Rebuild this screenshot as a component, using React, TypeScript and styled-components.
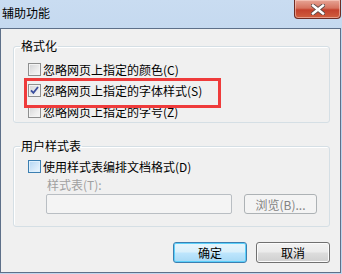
import styled, { createGlobalStyle } from "styled-components";

const GlobalStyle = createGlobalStyle`
  html, body {
    margin: 0;
    padding: 0;
  }
  body {
    font-family: "Noto Sans CJK SC", "Noto Sans", sans-serif;
    font-size: 12px;
    color: #000;
  }
`;

const CheckMark = () => (
  <svg width="9" height="9" viewBox="0 0 9 9">
    <path d="M1 4.3 L3.4 6.9 L8 1" fill="none" stroke="#3b4f9d" strokeWidth="1.8" />
  </svg>
);

const CloseGlyph = () => (
  <svg width="14" height="11" viewBox="0 0 14 11">
    <path d="M2 1.5 L12 9.5 M12 1.5 L2 9.5" stroke="#5d4a47" strokeWidth="4.2" strokeLinecap="square" />
    <path d="M2 1.5 L12 9.5 M12 1.5 L2 9.5" stroke="#ffffff" strokeWidth="2.4" strokeLinecap="square" />
  </svg>
);

const App = () => {
  return (
    <Window>
      <GlobalStyle />
      <TitleBar>
        <Title>辅助功能</Title>
        <CloseButton>
          <CloseGlyph />
        </CloseButton>
      </TitleBar>
      <Client>
        <GroupBox $top={10} $padTop={6} $padBottom={0}>
          <Legend>格式化</Legend>
          <Row>
            <Check />
            <Label>忽略网页上指定的颜色(C)</Label>
          </Row>
          <Row>
            <Check>
              <CheckMark />
            </Check>
            <Label>忽略网页上指定的字体样式(S)</Label>
          </Row>
          <Row>
            <Check />
            <Label>忽略网页上指定的字号(Z)</Label>
          </Row>
        </GroupBox>
        <GroupBox $top={16} $padTop={3} $padBottom={12}>
          <Legend>用户样式表</Legend>
          <Row>
            <Check $hot />
            <Label>使用样式表编排文档格式(D)</Label>
          </Row>
          <FieldLabel>样式表(T):</FieldLabel>
          <FieldRow>
            <TextInput disabled />
            <SmallButton disabled>浏览(B)...</SmallButton>
          </FieldRow>
        </GroupBox>
        <ButtonBar>
          <DialogButton $primary>确定</DialogButton>
          <DialogButton>取消</DialogButton>
        </ButtonBar>
      </Client>
      <Highlight />
    </Window>
  );
};

const Window = styled.div`
  position: relative;
  width: 342px;
  height: 274px;
  display: flex;
  flex-direction: column;
  overflow: hidden;
  background: linear-gradient(180deg, #c9dcf1 0%, #bad1eb 40%, #bfd5ed 100%);
`;

const TitleBar = styled.div`
  height: 28px;
  display: flex;
  justify-content: space-between;
  align-items: flex-start;
`;

const Title = styled.div`
  padding: 6px 0 0 2px;
  line-height: 14px;
  color: #000;
`;

const CloseButton = styled.div`
  width: 45px;
  height: 18px;
  margin-right: 1px;
  display: flex;
  align-items: center;
  justify-content: center;
  border: 1px solid #6e2c24;
  border-top: none;
  border-radius: 0 0 4px 4px;
  background: linear-gradient(180deg, #e7a596 0%, #d6735f 45%, #c4412c 55%, #cf5f3f 100%);
  box-shadow: inset 0 0 0 1px rgba(255, 220, 210, 0.5);
`;

const Client = styled.div`
  flex: 1;
  margin: 0 1px 1px 0;
  padding: 0 10px 0 12px;
  display: flex;
  flex-direction: column;
  border: 1px solid #5e7089;
  background: #f0f0f0;
`;

const GroupBox = styled.fieldset<{ $top: number; $padTop: number; $padBottom: number }>`
  margin: ${(p) => p.$top}px 0 0;
  padding: ${(p) => p.$padTop}px 0 ${(p) => p.$padBottom}px 6px;
  min-width: 0;
  border: 1px solid #d5dfe5;
  border-radius: 3px;
  box-shadow: inset 1px 1px 0 #ffffff;
`;

const Legend = styled.legend`
  padding: 0 1px;
  line-height: 14px;
`;

const Row = styled.div`
  display: flex;
  align-items: center;
  gap: 2px;
  height: 21px;
  margin-left: 8px;
`;

const Check = styled.span<{ $hot?: boolean }>`
  box-sizing: border-box;
  width: 13px;
  height: 13px;
  display: flex;
  align-items: center;
  justify-content: center;
  border: 1px solid ${(p) => (p.$hot ? "#3c7fb1" : "#8e8f8f")};
  background: ${(p) =>
    p.$hot
      ? "linear-gradient(135deg, #b3d6f3 0%, #dcedfb 70%, #eef6fd 100%)"
      : "linear-gradient(135deg, #d2d3d5 0%, #ececec 60%, #f8f8f8 100%)"};
  box-shadow: inset 0 0 0 1px ${(p) => (p.$hot ? "#def0fd" : "#f3f3f3")};
`;

const Label = styled.span`
  line-height: 14px;
  white-space: nowrap;
`;

const FieldLabel = styled.div`
  margin-left: 27px;
  line-height: 16px;
  color: #a0a0a0;
`;

const FieldRow = styled.div`
  display: flex;
  gap: 12px;
  margin: 1px 0 0 26px;
`;

const TextInput = styled.input`
  box-sizing: border-box;
  width: 186px;
  height: 20px;
  margin: 0;
  border: 1px solid #b9bec3;
  border-radius: 2px;
  background: #f4f4f4;
`;

const SmallButton = styled.button`
  box-sizing: border-box;
  width: 73px;
  height: 20px;
  padding: 0;
  border: 1px solid #adb2b5;
  border-radius: 3px;
  background: #f4f4f4;
  font-family: inherit;
  font-size: 12px;
  color: #838383;
`;

const ButtonBar = styled.div`
  display: flex;
  justify-content: flex-end;
  gap: 9px;
  margin-top: 15px;
`;

const DialogButton = styled.div<{ $primary?: boolean }>`
  box-sizing: border-box;
  width: 74px;
  height: 21px;
  display: flex;
  align-items: center;
  justify-content: center;
  border-radius: 3px;
  border: 1px solid ${(p) => (p.$primary ? "#3c7fb1" : "#707070")};
  box-shadow: inset 0 0 0 1px ${(p) => (p.$primary ? "#5cd0fa" : "#fbfbfb")};
  background: ${(p) =>
    p.$primary
      ? "linear-gradient(180deg, #e8f5fc 0%, #d9f0fb 48%, #bee6fd 52%, #a7d9f5 100%)"
      : "linear-gradient(180deg, #f2f2f2 0%, #ebebeb 48%, #dddddd 52%, #cfcfcf 100%)"};
`;

const Highlight = styled.div`
  position: absolute;
  left: 24px;
  top: 78px;
  width: 197px;
  height: 30px;
  box-sizing: border-box;
  border: 3px solid #ef3b3b;
  pointer-events: none;
`;

export default App;
